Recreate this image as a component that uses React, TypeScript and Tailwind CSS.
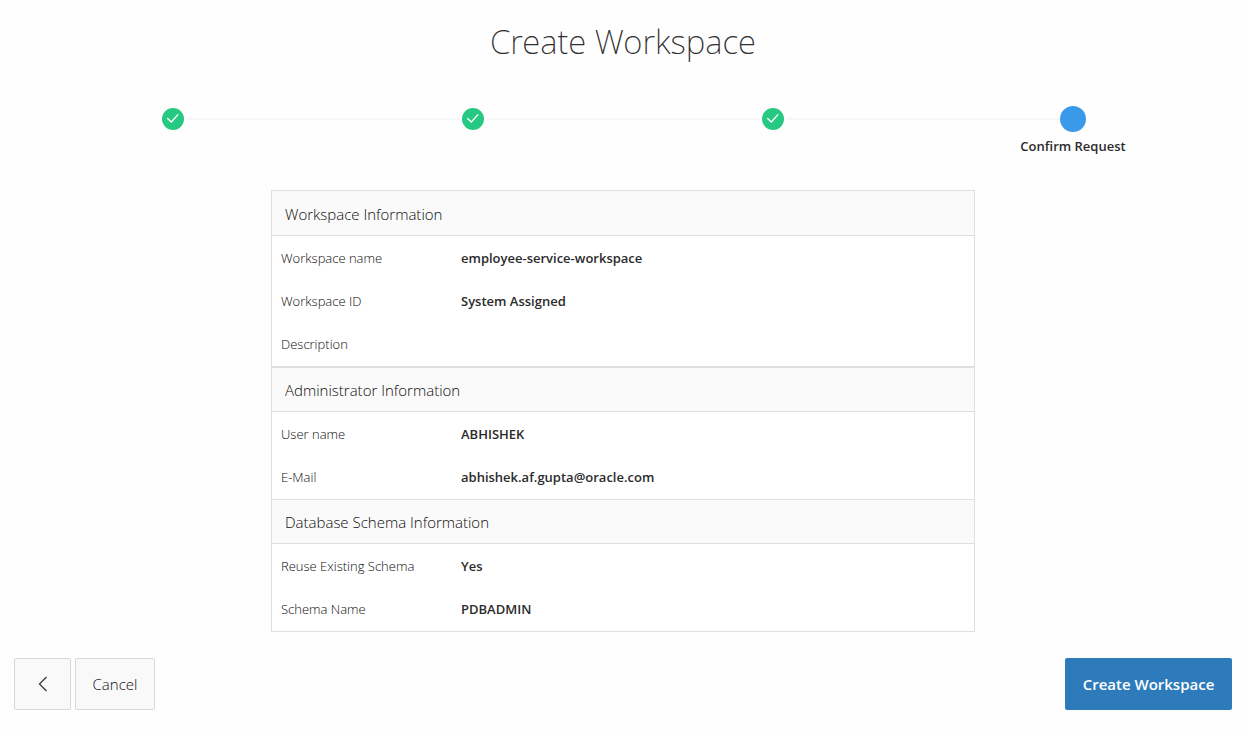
import { Fragment } from "react";

type Row = { label: string; value: string };
type Section = { title: string; rows: Row[]; closed?: boolean };

const sections: Section[] = [
  {
    title: "Workspace Information",
    closed: true,
    rows: [
      { label: "Workspace name", value: "employee-service-workspace" },
      { label: "Workspace ID", value: "System Assigned" },
      { label: "Description", value: "" },
    ],
  },
  {
    title: "Administrator Information",
    rows: [
      { label: "User name", value: "ABHISHEK" },
      { label: "E-Mail", value: "abhishek.af.gupta@oracle.com" },
    ],
  },
  {
    title: "Database Schema Information",
    rows: [
      { label: "Reuse Existing Schema", value: "Yes" },
      { label: "Schema Name", value: "PDBADMIN" },
    ],
  },
];

function DoneStep() {
  return (
    <li className="flex w-[26px] shrink-0 justify-center">
      <svg className="size-[22px]" viewBox="0 0 22 22" role="img" aria-label="Completed step">
        <circle cx="11" cy="11" r="11" fill="#25c981" />
        <path d="M5.3 10.2 9.3 14 16.2 6.4" fill="none" stroke="#fff" strokeWidth="1.4" />
      </svg>
    </li>
  );
}

function Steps() {
  return (
    <ol className="mx-auto mt-10 flex w-full max-w-[926px] items-center">
      {[1, 2, 3].map((n) => (
        <Fragment key={n}>
          <DoneStep />
          <li aria-hidden="true" className="h-0.5 flex-1 bg-[#f7f7f7]" />
        </Fragment>
      ))}
      <li aria-current="step" className="relative size-[26px] shrink-0 rounded-full bg-[#3b99e9]">
        <span className="absolute top-[30px] left-1/2 -translate-x-1/2 text-[13px] leading-5 font-semibold whitespace-nowrap text-[#2b2b2b]">
          Confirm Request
        </span>
      </li>
    </ol>
  );
}

function SummarySection({ title, rows, closed }: Section) {
  return (
    <section>
      <h2 className="flex h-11 items-center border-b border-[#dfdfdf] bg-[#fafafa] px-[13px] pt-px text-[15px] font-light text-[#0c0c0c]">
        {title}
      </h2>
      <dl className={closed ? "border-b border-[#dfdfdf] bg-white pt-px" : "bg-white pt-px"}>
        {rows.map((row) => (
          <div key={row.label} className="flex h-[43px] items-center px-[9px] text-[13px]">
            <dt className="w-[180px] shrink-0 font-light text-[#0c0c0c]">{row.label}</dt>
            <dd className="font-semibold text-[#2b2b2b]">{row.value}</dd>
          </div>
        ))}
      </dl>
    </section>
  );
}

export default function App() {
  return (
    <div className="min-h-screen bg-[#fefefe] pr-[17px] pb-6 pl-[14px] font-['Open_Sans','Noto_Sans',sans-serif]">
      <main>
        <h1 className="pt-[18px] text-center font-['Noto_Sans','Open_Sans',sans-serif] text-[33px] leading-[48px] font-extralight text-[#303030]">
          Create Workspace
        </h1>
        <Steps />
        <div className="mx-auto mt-[58px] w-full max-w-[704px] divide-y divide-[#dfdfdf] border border-[#dfdfdf] bg-[#fafafa] pt-px">
          {sections.map((section) => (
            <SummarySection key={section.title} {...section} />
          ))}
        </div>
      </main>
      <footer className="mt-[26px] flex h-[52px] gap-1 text-[15px]">
        <button
          type="button"
          aria-label="Back"
          className="flex w-[57px] items-center justify-center rounded-xs border border-[#d8d8d8] bg-[#f9f9f9] text-[#404040]"
        >
          <svg className="h-4 w-[10px]" viewBox="0 0 10 16" fill="none" stroke="currentColor" strokeWidth="1.4">
            <path d="M8.5 1 1.5 8 8.5 15" />
          </svg>
        </button>
        <button type="button" className="w-20 rounded-xs border border-[#d8d8d8] bg-[#f9f9f9] font-light text-[#0c0c0c]">
          Cancel
        </button>
        <button type="button" className="ml-auto w-[167px] rounded-xs bg-[#2d7bbb] font-semibold text-white">
          Create Workspace
        </button>
      </footer>
    </div>
  );
}
